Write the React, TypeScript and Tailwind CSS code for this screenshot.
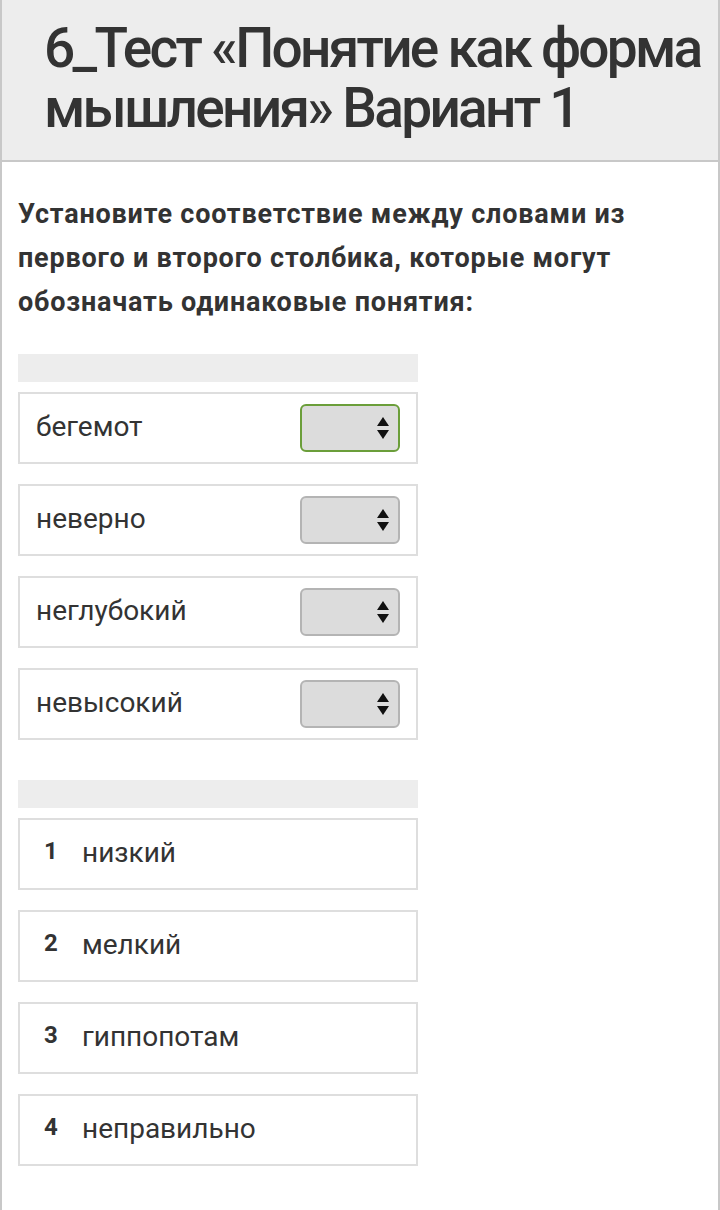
import { ReactNode } from 'react'

const left = ['бегемот', 'неверно', 'неглубокий', 'невысокий']
const right = ['низкий', 'мелкий', 'гиппопотам', 'неправильно']

function Arrows() {
  return (
    <svg width="14" height="24" viewBox="0 0 14 24" className="text-[#111]">
      <path d="M7 1 L13 10 L1 10 Z" fill="currentColor" />
      <path d="M1 14 L13 14 L7 23 Z" fill="currentColor" />
    </svg>
  )
}

function Row(props: { children: ReactNode }) {
  return (
    <div className="flex h-[72px] w-[400px] items-center border-2 border-[#dedede] bg-white">
      {props.children}
    </div>
  )
}

export default function App() {
  return (
    <div
      className="min-h-[1210px] w-[720px] border-x-2 border-[#c8c8c8] bg-white text-[#333]"
      style={{ fontFamily: 'Roboto, "Liberation Sans", sans-serif' }}
    >
      <header className="h-[162px] border-b-2 border-[#c8c8c8] bg-[#ededed] pt-[18px] pl-[42px]">
        <h1 className="text-[55px] leading-[60px] font-medium tracking-[-2.7px] text-[#333]">
          6_Тест «Понятие как форма мышления» Вариант 1
        </h1>
      </header>
      <main className="px-4 pt-[30px]">
        <p className="text-[27px] leading-[44px] font-bold tracking-[0.8px] text-[#333]">
          Установите соответствие между словами из первого и второго столбика, которые могут обозначать одинаковые понятия:
        </p>
        <div className="mt-[30px] h-[28px] w-[400px] bg-[#ededed]" />
        <div className="mt-[10px] flex flex-col gap-[20px]">
          {left.map((w, i) => (
            <Row key={w}>
              <span className="flex-1 pb-[2px] pl-[16px] text-[28px]">{w}</span>
              <div
                className={
                  i === 0
                    ? 'mr-[16px] flex h-[48px] w-[100px] items-center justify-end rounded-[6px] border-2 border-[#6b9e3a] bg-[#dcdcdc] pr-[8px]'
                    : 'mr-[16px] flex h-[48px] w-[100px] items-center justify-end rounded-[6px] border-2 border-[#b4b4b4] bg-[#dcdcdc] pr-[8px]'
                }
              >
                <Arrows />
              </div>
            </Row>
          ))}
        </div>
        <div className="mt-[40px] h-[28px] w-[400px] bg-[#ededed]" />
        <div className="mt-[10px] flex flex-col gap-[20px]">
          {right.map((w, i) => (
            <Row key={w}>
              <span className="w-[62px] pb-[6px] pl-[24px] text-[24px] font-bold">{i + 1}</span>
              <span className="pb-[2px] text-[28px]">{w}</span>
            </Row>
          ))}
        </div>
      </main>
    </div>
  )
}
